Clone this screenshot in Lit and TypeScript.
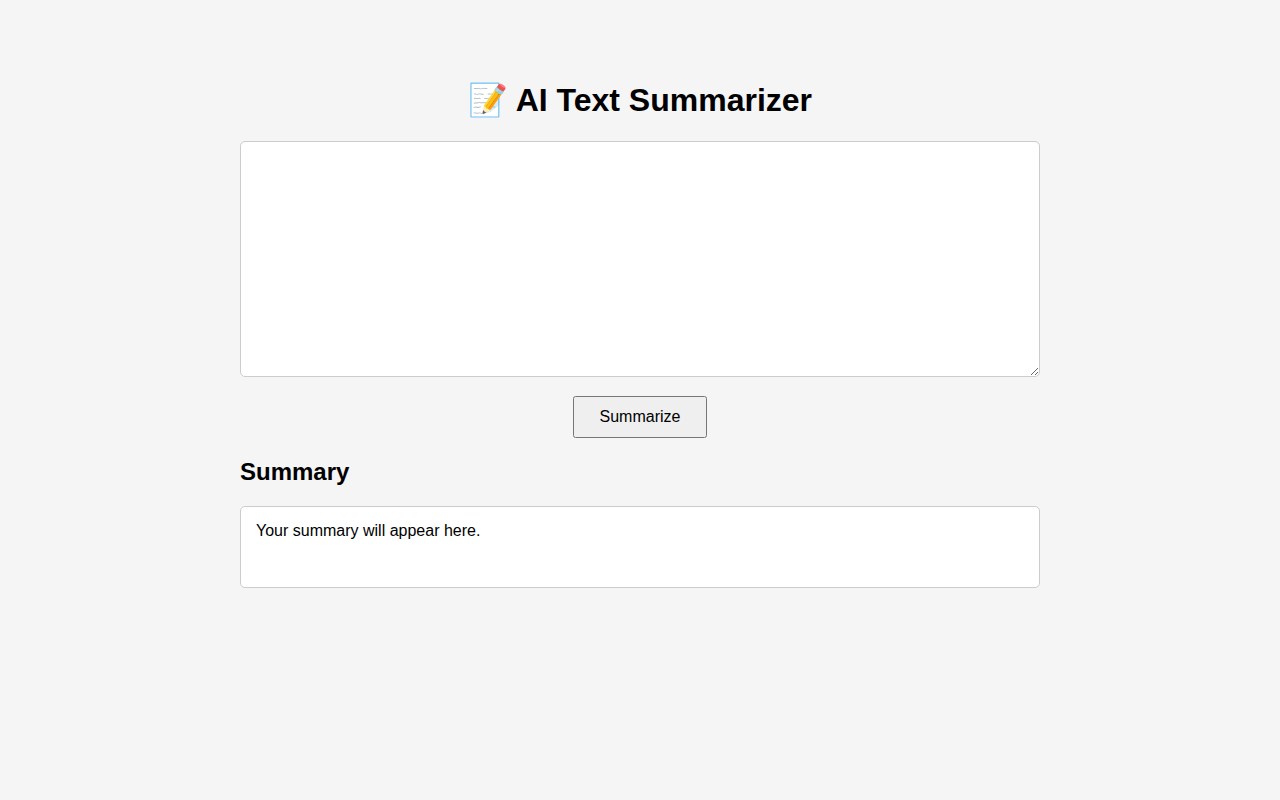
import { LitElement, html, css } from "lit";
import { customElement, state } from "lit/decorators.js";

@customElement("app-root")
export class AppRoot extends LitElement {
  static styles = css`
    :host {
      display: block;
      box-sizing: border-box;
      min-height: 100vh;
      padding: 60px 20px;
      background: #f5f5f5;
      color: #000;
      font-family: "Liberation Sans", Arial, sans-serif;
      font-size: 16px;
    }
    .container {
      max-width: 800px;
      margin: 0 auto;
    }
    .title {
      margin: 0;
      padding: 21px 0;
      font-size: 32px;
      line-height: 39px;
      text-align: center;
    }
    .source {
      display: block;
      box-sizing: border-box;
      width: 100%;
      height: 236px;
      padding: 15px;
      border: 1px solid #ccc;
      border-radius: 5px;
      background: #fff;
      font-family: inherit;
      font-size: 16px;
    }
    .actions {
      display: flex;
      justify-content: center;
      margin-top: 19px;
    }
    .submit {
      padding: 10px 25px;
      font-family: inherit;
      font-size: 16px;
      line-height: 18px;
      cursor: pointer;
    }
    .heading {
      margin: 20px 0;
      font-size: 24px;
      line-height: 28px;
    }
    .summary {
      box-sizing: border-box;
      min-height: 82px;
      padding: 15px;
      border: 1px solid #ccc;
      border-radius: 5px;
      background: #fff;
      line-height: 18px;
    }
  `;

  @state() private text = "";
  @state() private summary = "Your summary will appear here.";

  private onInput(event: Event) {
    this.text = (event.target as HTMLTextAreaElement).value;
  }

  private summarize() {
    const sentences = this.text.trim().match(/[^.!?]+[.!?]*/g);
    this.summary = sentences
      ? sentences.slice(0, 2).join("").trim()
      : "Your summary will appear here.";
  }

  render() {
    return html`
      <main class="container">
        <h1 class="title">📝 AI Text Summarizer</h1>
        <textarea
          class="source"
          aria-label="Text to summarize"
          .value=${this.text}
          @input=${this.onInput}
        ></textarea>
        <div class="actions">
          <button class="submit" type="button" @click=${this.summarize}>Summarize</button>
        </div>
        <h2 class="heading">Summary</h2>
        <div class="summary" aria-live="polite">${this.summary}</div>
      </main>
    `;
  }
}
